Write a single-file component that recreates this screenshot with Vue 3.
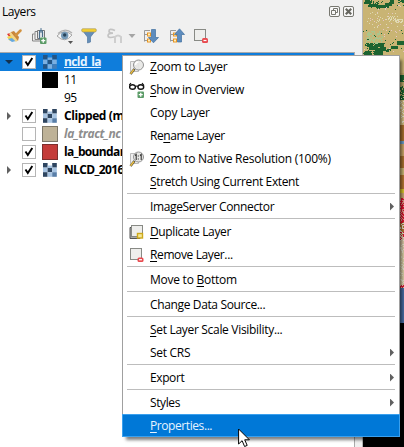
<script setup>
const menu = [
  { k: 'Z', t: 'oom to Layer', icon: 'zoom', ls: -0.25 },
  { k: 'S', t: 'how in Overview', icon: 'glasses', ls: -0.32 },
  { t: 'Copy Layer', ls: -0.22 },
  { p: 'Re', k: 'n', t: 'ame Layer', ls: -0.42 },
  { k: 'Z', t: 'oom to Native Resolution (100%)', icon: 'native', ls: -0.26 },
  { k: 'S', t: 'tretch Using Current Extent', ls: -0.37 },
  { sep: true },
  { t: 'ImageServer Connector', sub: true, ls: -0.36 },
  { sep: true },
  { k: 'D', t: 'uplicate Layer', icon: 'duplicate', ls: -0.38 },
  { k: 'R', t: 'emove Layer...', icon: 'remove', ls: -0.38 },
  { sep: true },
  { p: 'Move to ', k: 'B', t: 'ottom', ls: -0.25 },
  { sep: true },
  { t: 'Change Data Source...', ls: -0.36 },
  { sep: true },
  { k: 'S', t: 'et Layer Scale Visibility...', ls: -0.31 },
  { t: 'Set CRS', sub: true, ls: -0.3 },
  { sep: true },
  { t: 'Export', sub: true, ls: -0.4 },
  { sep: true },
  { t: 'Styles', sub: true, ls: -0.4 },
  { k: 'P', t: 'roperties...', active: true, ls: -0.42 }
]
const layers = [
  { name: 'ncld_la', arrow: 'down', check: true, icon: 'raster', cls: 'selected' },
  { name: '11', color: '#000', edge: '#000', cls: 'leaf' },
  { name: '95', cls: 'leaf' },
  { name: 'Clipped (m', arrow: 'right', check: true, icon: 'raster', cls: 'bold' },
  { name: 'la_tract_nc', check: false, color: '#beb297', edge: '#7d7768', cls: 'off' },
  { name: 'la_boundar', check: true, color: '#c43c39', edge: '#7c2f2d', cls: 'bold tight' },
  { name: 'NLCD_2016', arrow: 'right', check: true, icon: 'raster', cls: 'bold tight' }
]
const shades = { d: '#2e4560', l: '#a9c5e3', m: '#587ea8' }
const tiles = ['d.d', 'ldl', 'dlm'].flatMap((row, y) =>
  [...row].map((c, x) => ({ x: x * 4.6, y: y * 4.6, h: 4.6, fill: shades[c] || 'none' }))
)
tiles.push({ x: 4.6, y: 2.5, h: 2.4, fill: shades.l })

// Land cover speckle, one square per map pixel
let seed = 90127
const rnd = () => (seed = (seed * 16807) % 2147483647) / 2147483647
const patch = (x, y, w, h, density) => {
  let d = ''
  for (let j = 0; j < h; j++)
    for (let i = 0; i < w; i++) {
      const edge = 1 - Math.pow((2 * i + 1) / w - 1, 2) * 0.4 - Math.pow((2 * j + 1) / h - 1, 2) * 0.3
      if (rnd() < density * edge) d += `M${x + i} ${y + j}h1v1h-1z`
    }
  return d
}
const bands = [
  [0, 73, '#c9b474'], [73, 24, '#bda66a'], [97, 28, '#d3bd83'], [125, 16, '#a8702f'], [141, 3, '#6b9bc3'],
  [144, 12, '#c9a366'], [156, 12, '#a8702f'], [168, 7, '#c9b474'], [175, 14, '#b37431'], [189, 4, '#d6c22c'],
  [193, 6, '#c6a36d'], [199, 22, '#d89a84'], [221, 14, '#b37431'], [235, 17, '#d7c4a4'], [252, 36, '#d8cba3'],
  [288, 35, '#476ba0'], [323, 124, '#000']
]
const specks = [
  { fill: '#1c6330', d: patch(1, 0, 8, 4, 1.1) + patch(10, 1, 6, 3, 0.8) + patch(5, 4, 10, 3, 1.3) + patch(13, 5, 13, 3, 1.4) + patch(22, 3, 7, 3, 1.3) + patch(26, 0, 5, 4, 1) + patch(35, 0, 6, 3, 0.8) + patch(0, 0, 41, 10, 0.05) },
  { fill: '#dfdab2', d: patch(23, 16, 10, 5, 0.45) + patch(32, 19, 9, 4, 0.9) + patch(4, 12, 34, 16, 0.04) },
  { fill: '#e6c7c3', d: patch(0, 5, 41, 49, 0.03) },
  { fill: '#aac68d', d: patch(3, 31, 17, 13, 0.6) },
  { fill: '#1c6330', d: patch(2, 43, 10, 4, 1.1) + patch(12, 43, 9, 4, 1.3) + patch(6, 46, 9, 4, 1.3) + patch(15, 47, 8, 4, 1.2) + patch(10, 50, 10, 5, 1.4) + patch(1, 51, 8, 4, 1.4) + patch(34, 41, 7, 4, 1.3) + patch(28, 46, 7, 3, 1.3) + patch(23, 49, 5, 3, 0.9) + patch(0, 28, 41, 26, 0.04) },
  { fill: '#1c6330', d: patch(37, 75, 4, 7, 1.2) + patch(37, 86, 4, 11, 0.65) + patch(37, 96, 4, 4, 1.2) },
  { fill: '#e3e1c9', d: patch(37, 98, 4, 25, 0.4) + patch(37, 220, 4, 67, 0.35) },
  { fill: '#dd1230', d: patch(37, 198, 4, 25, 0.7) + patch(37, 230, 4, 10, 0.35) + patch(37, 285, 4, 3, 0.6) }
]
</script>

<template>
  <div class="app">
    <main class="workspace">
      <section class="panel">
        <header class="title">
          <span>Layers</span>
          <div class="buttons">
            <svg width="11" height="11" viewBox="0 0 11 11"><rect x=".5" y=".5" width="10" height="10" rx="1.5" fill="#f8f8f8" stroke="#777770" /><path d="M4.500 4V2.500h4v4H7M2.500 4.500h4v4h-4z" fill="none" stroke="#777770" /></svg>
            <svg width="11" height="11" viewBox="0 0 11 11"><rect x=".5" y=".5" width="10" height="10" rx="1.5" fill="#f8f8f8" stroke="#777770" /><path d="M2.800 2.800l5.400 5.400M8.200 2.800l-5.400 5.400" stroke="#66665f" stroke-width="2.200" /></svg>
          </div>
        </header>

        <div class="toolbar">
          <svg width="16" height="16" viewBox="0 0 16 16"><path d="M1 6l6-2 2 5-5 1z" fill="#df3530" /><path d="M1 9l5-2 3 4-5 2z" fill="#f4d64a" /><path d="M2 11l4-1 4 3-4 1z" fill="#66a8df" /><path d="M5 4l7 8-2 2-7-8z" fill="#f1d68a" /><path d="M5 4l3-1 5 6-1 4z" fill="#c8873a" /><path d="M10 7l4.500-4.500" stroke="#d2923f" stroke-width="2.500" stroke-linecap="round" /></svg>
          <svg width="16" height="16" viewBox="0 0 16 16"><path d="M3.500 6H1.500v7h8M6 3.500H4v8h7" fill="none" stroke="#858585" /><path d="M6.500 2.500h7v8h-7z" fill="#f5f5f5" stroke="#777" /><path d="M8.500 11V4a1.500 1.500 0 013 0v5" fill="none" stroke="#4a6c88" stroke-width="1.300" /><path d="M10 0v5" stroke="#557895" /><rect x="9" y="9.500" width="6.500" height="6.500" rx="1" fill="#5b9b67" /><path d="M12.250 10.700v4M10.250 12.700h4" stroke="#fff" stroke-width="1.300" /></svg>
          <svg width="17" height="16" viewBox="0 0 17 16"><path d="M0 8q7-8 15-1-7 9-15 1z" fill="#f7f7f7" stroke="#a5a5a5" /><path d="M1 5.500Q8-1 15 5" fill="none" stroke="#b1b1b1" stroke-width="1.400" /><circle cx="7.700" cy="7.500" r="3.700" fill="#7499b7" /><circle cx="7.700" cy="7" r="1.700" fill="#29445a" /><path d="M11 13h5l-2.500 3z" fill="#555" /></svg>
          <svg width="16" height="16" viewBox="0 0 16 16"><path d="M1 2l5.500 7v6l3-1V9L15 2z" fill="#658eb8" stroke="#527aa3" stroke-width=".7" /><rect x=".7" y=".7" width="14.600" height="3.200" rx="1.200" fill="#f2ce31" stroke="#a4965f" stroke-width=".6" /></svg>
          <svg width="16" height="16" viewBox="0 0 16 16"><path d="M8 2.500Q2 0 2 3.200q0 2 4 2-5 0-5 2.500 0 3 7 1" fill="none" stroke="#c3c3c3" stroke-width="1.700" /><path d="M8 14V9q3-3 6 0v5M8 12v3M14 12v3" fill="none" stroke="#cecece" stroke-width="2" /></svg>
          <svg width="8" height="16" viewBox="0 0 8 16"><path d="M.5 6h7L4 10z" fill="#a5a5a5" /></svg>
          <svg width="16" height="16" viewBox="0 0 16 16"><path d="M7 2.500H1.500v11M2 6.500h4M2 12.500h4" fill="none" stroke="#999" /><rect x="4.500" y="5" width="3" height="3" fill="#fff0bf" stroke="#e79625" /><rect x="4.500" y="11" width="3" height="3" fill="#fff0bf" stroke="#e79625" /><path d="M8.500 1.500h4v8h3l-5 5.300-5-5.300h3z" fill="#5d8cbe" stroke="#41709f" stroke-width=".7" /></svg>
          <svg width="16" height="16" viewBox="0 0 16 16"><path d="M7 2.500H1.500v11M2 6.500h4M2 12.500h4" fill="none" stroke="#999" /><rect x="4.500" y="5" width="3" height="3" fill="#fff0bf" stroke="#e79625" /><rect x="4.500" y="11" width="3" height="3" fill="#fff0bf" stroke="#e79625" /><path d="M8.500 14V6.500h-3l5-5.700 5 5.700h-3V14z" fill="#5d8cbe" stroke="#41709f" stroke-width=".7" /></svg>
          <svg width="16" height="16" viewBox="0 0 16 16"><rect x="1.500" y="1.500" width="11" height="11" fill="#eeeeec" stroke="#888a85" /><rect x="9" y="10" width="6" height="5" rx="1.500" fill="#e84a4f" /><path d="M10.500 12.500h3" stroke="#fff" stroke-width="1.200" /></svg>
        </div>

        <div class="tree">
          <div v-for="l in layers" :key="l.name" class="row" :class="l.cls">
            <i class="arrow" :class="l.arrow"></i>
            <span class="check" :class="{ hidden: l.check === undefined }">
              <svg v-if="l.check" width="12" height="12" viewBox="0 0 12 12"><path d="M2.500 5.500l2.300 3.500 4.500-7" fill="none" stroke="#000" stroke-width="1.900" /></svg>
            </span>
            <span class="symbol">
              <svg v-if="l.icon" class="raster" width="14" height="14" viewBox="0 0 14 14"><rect v-for="(c, i) in tiles" :key="i" :x="c.x" :y="c.y" width="4.600" :height="c.h" :fill="c.fill" /></svg>
              <svg v-else-if="l.color" width="16" height="16" viewBox="0 0 16 16"><rect x=".5" y=".5" width="15" height="15" :fill="l.color" :stroke="l.edge" /></svg>
            </span>
            <span class="name">{{ l.name }}</span>
          </div>
        </div>
      </section>

      <svg class="map" width="41" height="447" viewBox="0 0 41 447" shape-rendering="crispEdges">
        <rect v-for="b in bands" :key="b[0]" x="0" :y="b[0]" width="41" :height="b[1]" :fill="b[2]" />
        <path v-for="(s, i) in specks" :key="i" :d="s.d" :fill="s.fill" />
      </svg>
    </main>

    <nav class="menu">
      <template v-for="(m, i) in menu" :key="i">
        <hr v-if="m.sep" />
        <div v-else class="item" :class="{ active: m.active }">
          <span class="icon">
            <svg v-if="m.icon === 'zoom' || m.icon === 'native'" width="16" height="16" viewBox="0 0 16 16"><path d="M1.500 2.500h8v10h-8z" fill="#eee" stroke="#bbb" /><path d="M5.500 10l-4 5" stroke="#3a3a35" stroke-width="2.400" /><path d="M5 10.500l-3.500 4.300" stroke="#e8bd45" stroke-width="1.700" /><circle cx="9.500" cy="6" r="5" fill="#e8e8e6" fill-opacity=".94" stroke="#929292" /><path v-if="m.icon === 'native'" d="M6 4.500l1.200-1V9M11 4.500l1.200-1V9M9.300 4.500v1M9.300 7.500v1" fill="none" stroke="#333" stroke-width="1.100" /><path v-else d="M6.500 6q0-3 3-3" fill="none" stroke="#fff" stroke-width="1.500" /></svg>
            <svg v-else-if="m.icon === 'glasses'" width="16" height="16" viewBox="0 0 16 16"><path d="M0 3.500L2 1M15 3.500L13 1M6.500 4.500q1.200-1 2.400 0" fill="none" stroke="#111" stroke-width="1.200" /><ellipse cx="3.500" cy="5" rx="2.900" ry="2.300" fill="#fff" stroke="#111" stroke-width="1.400" /><ellipse cx="11.800" cy="5" rx="2.900" ry="2.300" fill="#fff" stroke="#111" stroke-width="1.400" /><rect x="8.500" y="9.500" width="6.500" height="6.500" rx="1" fill="#5b9b67" /><path d="M11.750 10.700v4M9.750 12.700h4" stroke="#fff" stroke-width="1.300" /></svg>
            <svg v-else-if="m.icon === 'duplicate'" width="16" height="16" viewBox="0 0 16 16"><path d="M1 3.500h10v11H1z" fill="#aaa" stroke="#555" /><rect x="2.500" y="1.500" width="11" height="11" fill="#eeeeec" stroke="#888a85" /><rect x="8.500" y="9.500" width="5" height="4.500" fill="#f4e89a" stroke="#cda91c" stroke-width="1.400" /></svg>
            <svg v-else-if="m.icon === 'remove'" width="16" height="16" viewBox="0 0 16 16"><rect x="1.500" y="1.500" width="11" height="11" fill="#eeeeec" stroke="#888a85" /><rect x="8.500" y="10.500" width="6" height="4.500" rx="1.500" fill="#e84a4f" /><path d="M10 12.700h3" stroke="#fff" stroke-width="1.200" /></svg>
          </span>
          <span class="label" :style="{ letterSpacing: m.ls + 'px' }">{{ m.p }}<u v-if="m.k">{{ m.k }}</u>{{ m.t }}</span>
          <i v-if="m.sub" class="arrow right"></i>
        </div>
      </template>
    </nav>

    <svg class="cursor" width="13" height="19" viewBox="0 0 13 19"><path d="M.6 1v15l3.500-3.300L6.600 18.500l2.600-1.100-2.500-5.600h4.700z" fill="#fff" stroke="#000" /></svg>
  </div>
</template>

<style scoped>
.app { position: relative; width: 404px; height: 447px; background: #f0f0f0; color: #000; font: 12px "Open Sans", "Noto Sans", sans-serif; overflow: hidden; }
.app svg { display: block; flex: none; }
.workspace { display: flex; height: 447px; }
.panel { display: flex; flex-direction: column; box-sizing: border-box; width: 363px; height: 447px; padding-right: 7px; border-right: 1px solid #b4b4b4; }
.title { display: flex; justify-content: space-between; height: 24px; line-height: 24px; padding-left: 2px; letter-spacing: -0.45px; }
.buttons { display: flex; gap: 3px; padding: 6px 1px 0 0; }
.toolbar { display: grid; grid-template-columns: 25px 26px 24px 26px 21px 15px 26px 24px 16px; height: 28px; padding: 4px 0 0 6px; box-sizing: border-box; }
.tree { flex: 1; border-top: 1px solid #aaa; border-right: 1px solid #aaa; background: #fff; }
.row { display: flex; align-items: center; height: 18px; line-height: 18px; white-space: nowrap; letter-spacing: -0.4px; }
.row .arrow { margin-left: 5px; }
.arrow { flex: none; width: 8px; height: 8px; }
.down { background: #12304e; clip-path: polygon(0 2px, 8px 2px, 4px 6px); }
.right { background: #606060; clip-path: polygon(2px 0, 6px 4px, 2px 8px); }
.check { box-sizing: border-box; width: 14px; height: 14px; margin-left: 9px; border: 1px solid #b5b5b5; background: #fff; }
.check.hidden { visibility: hidden; }
.symbol { display: flex; justify-content: center; width: 16px; margin: 0 6px; }
.selected { background: #0f7ddb; color: #e7f4ff; }
.selected .raster { opacity: .7; }
.selected .name { text-decoration: underline; text-decoration-skip-ink: none; letter-spacing: -0.6px; }
.bold, .selected { font-weight: 700; }
.tight { letter-spacing: -0.65px; }
.leaf { letter-spacing: -0.6px; }
.off { font-weight: 700; font-style: italic; color: #8d8d8d; }
.menu { position: absolute; left: 122px; top: 55px; width: 278px; height: 382px; background: #fff; box-shadow: 3px 4px 3px -1px rgba(0, 0, 0, .5); }
.menu::after { content: ""; position: absolute; inset: 0; border: 1px solid #a0a0a0; border-bottom: 0; height: 358px; }
.item { display: flex; align-items: center; height: 23px; line-height: 23px; padding: 0 4px 0 7px; white-space: nowrap; }
.icon { width: 21px; }
.label { flex: 1; }
.label u { text-decoration-skip-ink: none; text-underline-offset: 2px; }
.menu hr { margin: 0 5px 1px; border: 0; height: 1px; background: #bdbdbd; }
.active { background: #0078d7; color: #e6f3ff; box-shadow: inset 0 0 0 1px #3aa0ee; }
.cursor { position: absolute; left: 238px; top: 428px; }
</style>
